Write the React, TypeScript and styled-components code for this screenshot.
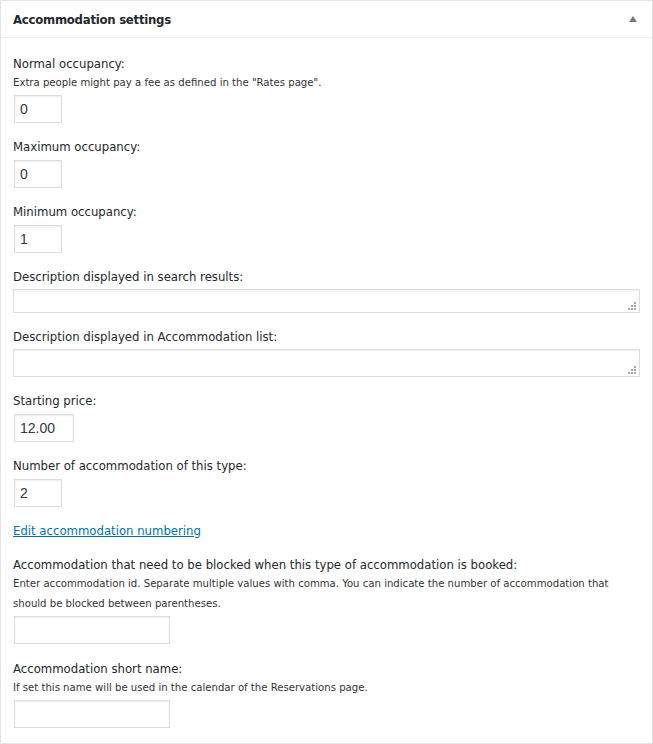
import React from "react";
import styled, { createGlobalStyle } from "styled-components";

const GlobalStyle = createGlobalStyle`
  * {
    box-sizing: border-box;
  }
  body {
    margin: 0;
    background: #fff;
    font-family: "DejaVu Sans Condensed", "Liberation Sans", Arial, sans-serif;
    color: #23282d;
  }
`;

type FieldDef = {
  label: string;
  help?: string;
  kind: "input" | "textarea";
  value?: string;
  width?: number;
  height?: number;
};

const fields: FieldDef[] = [
  {
    label: "Normal occupancy:",
    help: 'Extra people might pay a fee as defined in the "Rates page".',
    kind: "input",
    value: "0",
    width: 48,
  },
  { label: "Maximum occupancy:", kind: "input", value: "0", width: 48 },
  { label: "Minimum occupancy:", kind: "input", value: "1", width: 48 },
  { label: "Description displayed in search results:", kind: "textarea", height: 24 },
  { label: "Description displayed in Accommodation list:", kind: "textarea", height: 28 },
  { label: "Starting price:", kind: "input", value: "12.00", width: 60 },
  { label: "Number of accommodation of this type:", kind: "input", value: "2", width: 48 },
];

const blockFields: FieldDef[] = [
  {
    label: "Accommodation that need to be blocked when this type of accommodation is booked:",
    help: "Enter accommodation id. Separate multiple values with comma. You can indicate the number of accommodation that should be blocked between parentheses.",
    kind: "input",
    value: "",
    width: 156,
  },
  {
    label: "Accommodation short name:",
    help: "If set this name will be used in the calendar of the Reservations page.",
    kind: "input",
    value: "",
    width: 156,
  },
];

const Grip = () => (
  <GripIcon width="8" height="8" viewBox="0 0 8 8">
    <rect x="6" y="0" width="2" height="2" />
    <rect x="3" y="3" width="2" height="2" />
    <rect x="6" y="3" width="2" height="2" />
    <rect x="0" y="6" width="2" height="2" />
    <rect x="3" y="6" width="2" height="2" />
    <rect x="6" y="6" width="2" height="2" />
  </GripIcon>
);

const Field: React.FC<{ field: FieldDef; gap?: number }> = ({ field, gap = 14 }) => (
  <FieldRow $gap={gap}>
    <Label>{field.label}</Label>
    {field.help && <Help>{field.help}</Help>}
    {field.kind === "input" ? (
      <TextInput
        type="text"
        defaultValue={field.value}
        $width={field.width || 48}
        $afterHelp={!!field.help}
      />
    ) : (
      <AreaWrap $height={field.height || 28}>
        <TextArea />
        <Grip />
      </AreaWrap>
    )}
  </FieldRow>
);

const App: React.FC = () => {
  return (
    <>
      <GlobalStyle />
      <Postbox>
        <Header>
          <Title>Accommodation settings</Title>
          <svg width="8" height="6" viewBox="0 0 8 6">
            <polygon points="4,0 8,6 0,6" fill="#72777c" />
          </svg>
        </Header>
        <Inside>
          {fields.map((field) => (
            <Field key={field.label} field={field} />
          ))}
          <LinkRow>
            <EditLink href="#">Edit accommodation numbering</EditLink>
          </LinkRow>
          {blockFields.map((field) => (
            <Field key={field.label} field={field} gap={15} />
          ))}
        </Inside>
      </Postbox>
    </>
  );
};

const Postbox = styled.div`
  width: 653px;
  height: 744px;
  border: 1px solid #e5e5e5;
  box-shadow: 0 1px 1px rgba(0, 0, 0, 0.04);
  background: #fff;
`;

const Header = styled.div`
  height: 37px;
  border-bottom: 1px solid #eee;
  display: flex;
  align-items: center;
  justify-content: space-between;
  padding: 0 15px 0 12px;
`;

const Title = styled.h2`
  margin: 3px 0 0;
  font-size: 13px;
  font-weight: 700;
  letter-spacing: -0.25px;
  line-height: 1.4;
  color: #23282d;
`;

const Inside = styled.div`
  padding: 16px 12px 0 12px;
`;

const FieldRow = styled.div<{ $gap: number }>`
  margin-bottom: ${(p) => p.$gap}px;
`;

const Label = styled.div`
  font-size: 13px;
  line-height: 20px;
  color: #23282d;
`;

const Help = styled.div`
  font-size: 11.25px;
  line-height: 20px;
  margin-top: -1px;
  color: #333;
`;

const TextInput = styled.input<{ $width: number; $afterHelp: boolean }>`
  display: block;
  width: ${(p) => p.$width}px;
  height: 28px;
  margin: ${(p) => (p.$afterHelp ? "2px" : "3px")} 0 0 1px;
  padding: 0 5px;
  border: 1px solid #ddd;
  border-radius: 0;
  box-shadow: inset 0 1px 2px rgba(0, 0, 0, 0.07);
  background: #fff;
  font-family: "Liberation Sans", Arial, sans-serif;
  font-size: 14px;
  color: #32373c;
  outline: none;
`;

const AreaWrap = styled.div<{ $height: number }>`
  position: relative;
  margin-top: 2px;
  height: ${(p) => p.$height}px;
`;

const TextArea = styled.textarea`
  display: block;
  width: 100%;
  height: 100%;
  margin: 0;
  padding: 2px 6px;
  border: 1px solid #ddd;
  border-radius: 0;
  box-shadow: inset 0 1px 2px rgba(0, 0, 0, 0.07);
  resize: none;
  font-family: "Liberation Sans", Arial, sans-serif;
  font-size: 14px;
  outline: none;
`;

const GripIcon = styled.svg`
  position: absolute;
  right: 4px;
  bottom: 3px;
  fill: #a7a7a7;
`;

const LinkRow = styled.div`
  font-size: 13px;
  line-height: 20px;
  margin-bottom: 14px;
`;

const EditLink = styled.a`
  color: #0073aa;
  text-decoration: underline;
`;

export default App;
